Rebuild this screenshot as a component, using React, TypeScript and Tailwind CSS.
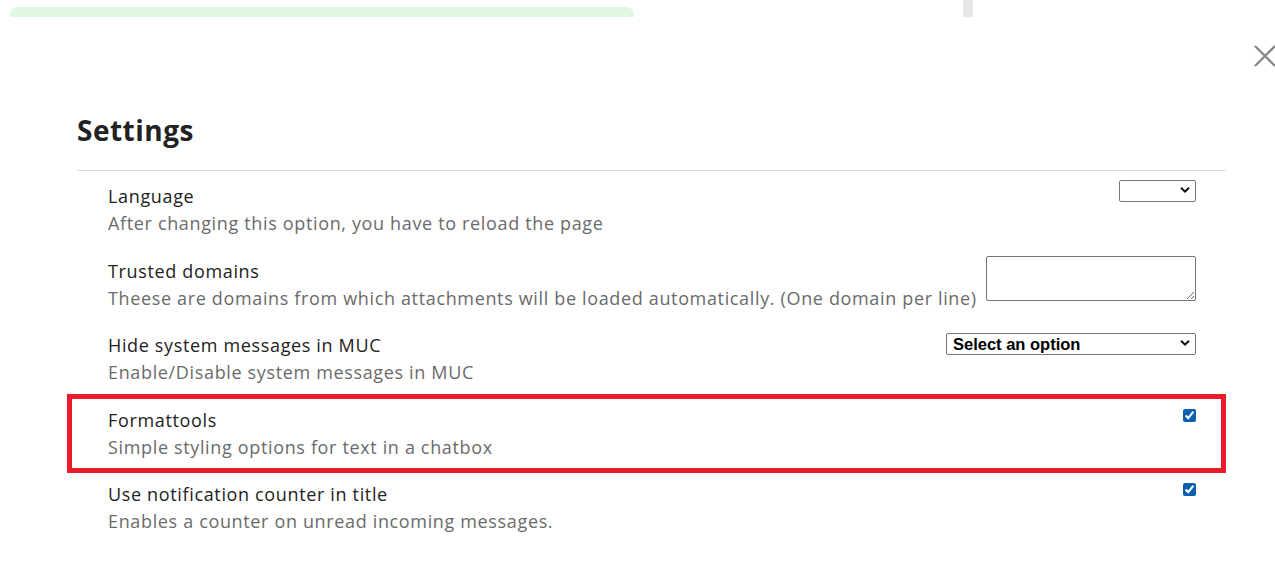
import React from 'react';

type Setting = {
    title: string;
    description: string;
    control: React.ReactNode;
    highlighted?: boolean;
};

const Chevron: React.FC = () => (
    <svg className="pointer-events-none absolute right-[6px] top-1/2 -translate-y-1/2" width="10" height="7" viewBox="0 0 10 7">
        <path d="M1 1.2 L5 5.2 L9 1.2" fill="none" stroke="#111" strokeWidth="2" />
    </svg>
);

const Select: React.FC<{ width: string; label?: string }> = ({ width, label }) => (
    <div className={`relative ${width} h-[22px]`}>
        <select
            defaultValue=""
            className="h-full w-full appearance-none rounded-[2px] border border-[#767676] bg-white pl-[6px] text-[16.5px] font-bold leading-none text-black outline-none"
            style={{ fontFamily: '"Liberation Sans", Arial, sans-serif' }}
        >
            <option value="">{label ?? ''}</option>
        </select>
        <Chevron />
    </div>
);

const Checkbox: React.FC = () => (
    <input type="checkbox" defaultChecked className="m-0 h-[13px] w-[13px] accent-[#0b5fb3]" />
);

const settings: Setting[] = [
    {
        title: 'Language',
        description: 'After changing this option, you have to reload the page',
        control: <div className="mt-[-4px]"><Select width="w-[77px]" /></div>,
    },
    {
        title: 'Trusted domains',
        description: 'Theese are domains from which attachments will be loaded automatically. (One domain per line)',
        control: (
            <textarea className="mt-[-2px] ml-[12px] block h-[45px] w-[210px] shrink-0 rounded-[2px] border border-[#767676] bg-white outline-none" />
        ),
    },
    {
        title: 'Hide system messages in MUC',
        description: 'Enable/Disable system messages in MUC',
        control: <div className="mt-[0px]"><Select width="w-[250px]" label="Select an option" /></div>,
    },
    {
        title: 'Formattools',
        description: 'Simple styling options for text in a chatbox',
        control: <div className="mt-[2px] flex"><Checkbox /></div>,
        highlighted: true,
    },
    {
        title: 'Use notification counter in title',
        description: 'Enables a counter on unread incoming messages.',
        control: <div className="mt-[2px] flex"><Checkbox /></div>,
    },
];

export default function App() {
    return (
        <div
            className="relative h-[581px] w-full overflow-hidden bg-white"
            style={{ fontFamily: '"Open Sans", "Noto Sans", sans-serif' }}
        >
            {/* strip of the page behind the dialog */}
            <div className="flex h-[17px] items-end">
                <div className="ml-[10px] h-[10px] w-[624px] rounded-t-[8px] bg-[#dff7df]" />
                <div className="ml-[329px] h-[17px] w-[10px] self-start bg-[#e6e6e6]" />
            </div>

            <button className="absolute right-[-2px] top-[45px] text-[#8a8a8a]">
                <svg width="24" height="22" viewBox="0 0 24 22">
                    <path d="M2 1 L22 21 M22 1 L2 21" stroke="currentColor" strokeWidth="2.4" />
                </svg>
            </button>

            <div className="ml-[77px] mr-[49px] pt-[94px]">
                <h2 className="text-[28px] font-bold leading-[38px] tracking-[0.5px] text-[#222]">Settings</h2>
                <div className="mt-[21px] border-t border-[#dcdcdc]" />

                <div className="pt-[2px]">
                    {settings.map(s => (
                        <div key={s.title} className="relative flex items-start justify-between py-[10px] pl-[31px] pr-[30px]">
                            <div className="min-w-0 whitespace-nowrap text-[18px] leading-[27.25px] tracking-[0.65px]">
                                <div className="text-[#222]">{s.title}</div>
                                <div className="text-[#6b6b6b]">{s.description}</div>
                            </div>
                            {s.control}
                            {s.highlighted && (
                                <div className="pointer-events-none absolute -left-[10px] right-0 -top-[3px] -bottom-[2px] border-[5px] border-[#e81c2a]" />
                            )}
                        </div>
                    ))}
                </div>
            </div>
        </div>
    );
}
